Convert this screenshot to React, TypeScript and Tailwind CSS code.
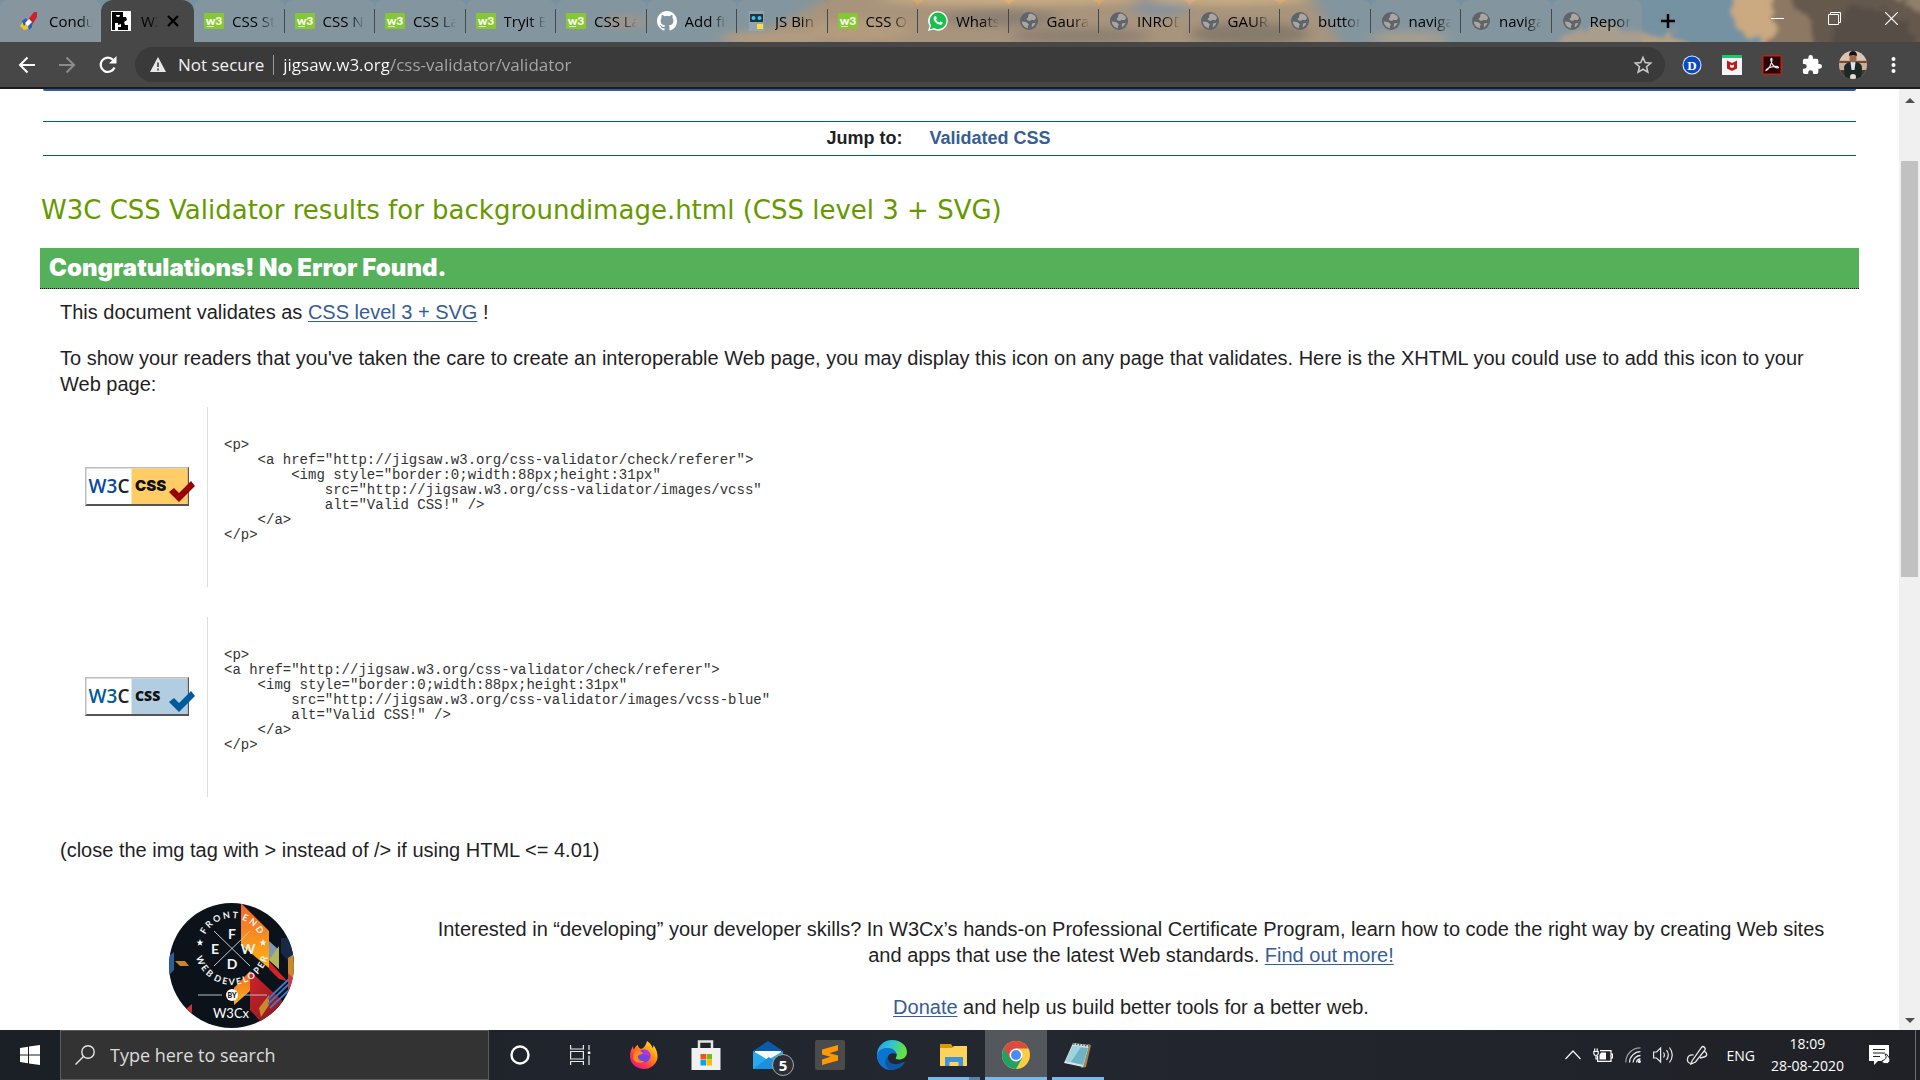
import React from "react";

type TabIcon = "w3" | "github" | "jsbin" | "whatsapp" | "globe";

const tabs: { title: string; icon: TabIcon }[] = [
  { title: "CSS Styling Lists", icon: "w3" },
  { title: "CSS Navigation", icon: "w3" },
  { title: "CSS Layout", icon: "w3" },
  { title: "Tryit Editor", icon: "w3" },
  { title: "CSS Layout", icon: "w3" },
  { title: "Add files", icon: "github" },
  { title: "JS Bin", icon: "jsbin" },
  { title: "CSS Overflow", icon: "w3" },
  { title: "WhatsApp", icon: "whatsapp" },
  { title: "Gaurav", icon: "globe" },
  { title: "INRODUCTION", icon: "globe" },
  { title: "GAURAV", icon: "globe" },
  { title: "button", icon: "globe" },
  { title: "navigation", icon: "globe" },
  { title: "navigation", icon: "globe" },
  { title: "Report", icon: "globe" },
];

const yellowCode = `<p>
    <a href="http://jigsaw.w3.org/css-validator/check/referer">
        <img style="border:0;width:88px;height:31px"
            src="http://jigsaw.w3.org/css-validator/images/vcss"
            alt="Valid CSS!" />
    </a>
</p>`;

const blueCode = `<p>
<a href="http://jigsaw.w3.org/css-validator/check/referer">
    <img style="border:0;width:88px;height:31px"
        src="http://jigsaw.w3.org/css-validator/images/vcss-blue"
        alt="Valid CSS!" />
    </a>
</p>`;

function SiteIcon({ kind }: { kind: TabIcon }) {
  if (kind === "w3")
    return (
      <svg viewBox="0 0 20 20" className="size-5 shrink-0">
        <rect y="2" width="20" height="16" rx="1" fill="#86c832" />
        <text x="10" y="13.500" textAnchor="middle" fontFamily="Lato, sans-serif" fontWeight="900" fontSize="12" fill="#fff">w3</text>
        <path d="M3 15.500h7" stroke="#d9f0b8" strokeWidth="1" />
      </svg>
    );
  if (kind === "github")
    return (
      <svg viewBox="0 0 16 16" className="size-5 shrink-0" fill="#fff">
        <path d="M8 0C3.58 0 0 3.58 0 8c0 3.54 2.29 6.53 5.47 7.59.4.07.55-.17.55-.38 0-.19-.01-.82-.01-1.49-2.01.37-2.53-.49-2.69-.94-.09-.23-.48-.94-.82-1.13-.28-.15-.68-.52-.01-.53.63-.01 1.08.58 1.23.82.72 1.21 1.87.87 2.33.66.07-.52.28-.87.51-1.07-1.78-.2-3.64-.89-3.64-3.95 0-.87.31-1.59.82-2.15-.08-.2-.36-1.02.08-2.12 0 0 .67-.21 2.2.82a7.6 7.6 0 0 1 4 0c1.53-1.04 2.2-.82 2.2-.82.44 1.100.16 1.920.08 2.120.51.56.82 1.270.82 2.150 0 3.070-1.870 3.750-3.650 3.950.29.25.54.73.54 1.480 0 1.070-.01 1.930-.01 2.200 0 .21.15.46.55.38A8 8 0 0 0 16 8c0-4.420-3.580-8-8-8z" />
      </svg>
    );
  if (kind === "jsbin")
    return (
      <svg viewBox="0 0 20 20" className="size-5 shrink-0">
        <rect x="2" y="0" width="15" height="20" fill="#93a5b1" />
        <rect x="3" y="3" width="13" height="8" fill="#24323c" />
        <circle cx="6.500" cy="7" r="2" fill="#3cc3f2" />
        <circle cx="12.500" cy="7" r="2" fill="#3cc3f2" />
        <rect x="10" y="13" width="6" height="5" fill="#f7df3e" />
      </svg>
    );
  if (kind === "whatsapp")
    return (
      <svg viewBox="0 0 20 20" className="size-5 shrink-0">
        <path d="M0 20l1.500-5A9.800 9.800 0 1 1 5.300 18.600z" fill="#fff" />
        <path d="M1.800 18.200l1.200-4A8.300 8.300 0 1 1 6 17.100z" fill="#18c04c" />
        <path d="M6.700 5.300c.6-.5 1.200-.3 1.400.2l.7 1.600c.1.500-.6 1-.8 1.300.8 1.500 1.900 2.500 3.400 3.100.4-.3.8-1.200 1.300-1l1.700.8c.6.4.1 1.600-.6 2.100-1.300.9-3.300.2-4.900-.8-1.600-1.100-2.900-2.900-3.200-4.300-.2-1.300.3-2.400 1-3z" fill="#fff" />
      </svg>
    );
  return (
    <svg viewBox="0 0 20 20" className="size-5 shrink-0">
      <circle cx="10" cy="10" r="9" fill="#5f646b" />
      <path d="M9.500 3.200l2.500-.6c2.300.6 4.200 2.200 5.100 4.400l-1.600 2.200-3.200-.5-1.200 1.300-2.200-.4-1.600-1.600 1.700-1.500zM2.800 10.500l4.200.6 3 2.100-1.200 2 .4 2C6 17 3.200 14.400 2.800 10.500zM13 12.500l3.500-.7c-.6 2-2 3.700-3.900 4.600z" fill="#a9a79f" />
    </svg>
  );
}

function Sky() {
  return (
    <svg aria-hidden="true" className="absolute inset-0 size-full" viewBox="0 0 1920 42" preserveAspectRatio="none">
      <defs>
        <filter id="soft" filterUnits="userSpaceOnUse" x="500" y="-40" width="1100" height="130"><feGaussianBlur stdDeviation="7 4" /></filter>
        <filter id="puff" filterUnits="userSpaceOnUse" x="1200" y="-40" width="760" height="130">
          <feTurbulence type="fractalNoise" baseFrequency="0.06" numOctaves="4" seed="4" result="n" />
          <feDisplacementMap in="SourceGraphic" in2="n" scale="20" xChannelSelector="R" yChannelSelector="G" />
          <feGaussianBlur stdDeviation="2" />
        </filter>
      </defs>
      <rect width="1920" height="42" fill="#7592a2" />
      <g filter="url(#soft)">
        <path d="M700 60L800 14 860-20h440l50 80z" fill="#b3906a" />
        <ellipse cx="625" cy="22" rx="22" ry="6" fill="#a7917f" />
        <ellipse cx="770" cy="38" rx="50" ry="7" fill="#c49d72" />
        <ellipse cx="860" cy="30" rx="50" ry="10" fill="#c79c6c" />
        <ellipse cx="1000" cy="18" rx="60" ry="9" fill="#85705c" />
        <ellipse cx="1080" cy="36" rx="70" ry="9" fill="#87705a" />
        <ellipse cx="1160" cy="8" rx="30" ry="9" fill="#7c8e99" />
        <ellipse cx="1250" cy="34" rx="60" ry="12" fill="#7c6650" />
        <ellipse cx="1010" cy="-1" rx="130" ry="5" fill="#f0bd78" />
        <ellipse cx="1230" cy="-1" rx="80" ry="5" fill="#f0bd78" />
        <ellipse cx="1410" cy="38" rx="40" ry="6" fill="#b7a385" />
      </g>
      <g filter="url(#puff)">
        <path d="M1545 50q22-18 42-22 16-12 32 2 22-2 32 8 12-8 26-2 18 4 34 24z" fill="#b5a086" />
        <path d="M1620 60q10-14 40-8l30 10z" fill="#7b6f62" />
        <path d="M1744 -15q-24 26-8 36-2 14 22 18l30 30h170V-15z" fill="#cba981" />
        <path d="M1775 -15q-6 22 0 34 10 12 -8 26l20 20h150V-15z" fill="#8d7863" />
        <path d="M1800 -15q-10 22 8 30 8 14 0 26l40 20h110V-15z" fill="#65594e" />
        <path d="M1840 14q30-12 50 0 20 14 24 20v26h-90z" fill="#564e47" />
        <path d="M1894 -15h60v36q-30-4-60-24z" fill="#8f7f6d" />
      </g>
    </svg>
  );
}

function TabStrip() {
  return (
    <header className="relative h-[42px] shrink-0 overflow-hidden font-['Open_Sans',sans-serif] text-[15px] text-black">
      <Sky />
      <div className="relative flex h-full">
        <div role="tablist" className="flex min-w-0 flex-1">
          <button role="tab" aria-selected="false" className="flex w-[101px] shrink-0 items-center gap-2.5 rounded-t-lg bg-[#999a99]/50 pl-[19px]">
            <svg viewBox="0 0 20 20" className="size-5 shrink-0">
              <path d="M8 10L15 1l3 0 0 5-5 8z" fill="#c9242b" />
              <path d="M1 15l5-7 4 2-1 8-4 1z" fill="#f4c430" />
              <path d="M3 10l4-3 2 3-4 5zM9 14l4-2 0 4-3 3z" fill="#1f5fc4" />
              <path d="M6 12l4-4 3 3-4 4z" fill="#fff" />
            </svg>
            <span className="w-11 overflow-hidden whitespace-nowrap mask-r-from-70%">Conduct</span>
          </button>
          <div role="tab" aria-selected="true" className="flex w-[93px] shrink-0 items-center rounded-t-xl bg-[#474747] pl-2.5">
            <svg viewBox="0 0 20 20" className="size-5 shrink-0">
              <rect width="20" height="20" fill="#fff" />
              <rect x="1" y="1" width="18" height="18" fill="#000" />
              <path d="M12 1h7v18h-2v-5h-3l-1-3 3-2-1-3h-3z" fill="#fff" />
              <path d="M5 4a2 2 0 1 0 4 0M4 12h3v2l3-1v3H7v3H4z" fill="#fff" />
            </svg>
            <span className="ml-2.5 w-[18px] overflow-hidden whitespace-nowrap mask-r-from-50%">W3C CSS</span>
            <button aria-label="Close tab" className="ml-1 p-1">
              <svg viewBox="0 0 12 12" className="size-3"><path d="M1 1l10 10M11 1L1 11" stroke="#000" strokeWidth="2.400" /></svg>
            </button>
          </div>
          {tabs.map((t, i) => (
            <button key={i} role="tab" aria-selected="false" className="relative flex min-w-0 flex-1 items-center gap-2 rounded-t-lg bg-[#999a99]/40 pl-2.5 pr-2.5 text-left">
              <SiteIcon kind={t.icon} />
              <span className="min-w-0 flex-1 overflow-hidden whitespace-nowrap mask-r-from-60%">{t.title}</span>
              {i < tabs.length - 1 && <span className="absolute right-0 top-[9px] h-6 w-px bg-[#45494b]" />}
            </button>
          ))}
        </div>
        <div className="flex w-[278px] shrink-0 items-center">
          <button aria-label="New tab" className="ml-[18px]">
            <svg viewBox="0 0 16 16" className="size-4"><path d="M8 1v14M1 8h14" stroke="#000" strokeWidth="2.500" /></svg>
          </button>
          <div className="ml-auto flex items-center gap-11 pr-[22px] pb-1.5">
            <button aria-label="Minimize"><svg viewBox="0 0 13 13" className="size-[13px]"><path d="M0 6.500h13" stroke="#fff" /></svg></button>
            <button aria-label="Restore"><svg viewBox="0 0 13 13" className="size-[13px]"><path d="M.5 2.500h10v10H.5zM2.500 2.500v-2h10v10h-2" stroke="#fff" fill="none" /></svg></button>
            <button aria-label="Close"><svg viewBox="0 0 13 13" className="size-[13px]"><path d="M0 0l13 13M13 0L0 13" stroke="#fff" strokeWidth="1.200" /></svg></button>
          </div>
        </div>
      </div>
    </header>
  );
}

function Toolbar() {
  return (
    <div className="flex h-[47px] shrink-0 items-center border-b-2 border-[#1c1c1c] bg-[#474747] font-['Open_Sans',sans-serif] text-[17px] text-[#f1f1f1]">
      <button aria-label="Back" className="ml-[18px]">
        <svg viewBox="0 0 18 18" className="size-[18px]" fill="none" stroke="#fff" strokeWidth="2"><path d="M17 9H2M9.500 1.500L2 9l7.500 7.500" /></svg>
      </button>
      <button aria-label="Forward" className="ml-[22px]">
        <svg viewBox="0 0 18 18" className="size-[18px]" fill="none" stroke="#8c8c8c" strokeWidth="2"><path d="M1 9h15M8.500 1.500L16 9l-7.500 7.500" /></svg>
      </button>
      <button aria-label="Reload" className="ml-[22px]">
        <svg viewBox="0 0 20 20" className="size-5"><path d="M16.500 12.500A7.200 7.200 0 1 1 15 4.700" fill="none" stroke="#fff" strokeWidth="2.200" /><path d="M18.500 1v7.500H11z" fill="#fff" /></svg>
      </button>
      <div className="ml-[17px] flex h-[35px] min-w-0 flex-1 items-center rounded-full bg-[#3a3a3a] pl-[15px] pr-3">
        <button className="flex items-center gap-3 whitespace-nowrap">
          <svg viewBox="0 0 16 15" className="h-[15px] w-4"><path d="M8 0l8 15H0z" fill="#e8e8e8" /><path d="M8 5.500v4.500M8 11.500v2" stroke="#3a3a3a" strokeWidth="1.600" /></svg>
          Not secure
        </button>
        <span className="mx-[9px] h-5 w-px bg-[#9a9a9a]" />
        <input
          aria-label="Address and search bar"
          defaultValue="jigsaw.w3.org/css-validator/validator"
          className="min-w-0 flex-1 bg-[linear-gradient(90deg,#ffffff_106px,#a9a9a9_106px)] bg-clip-text text-transparent outline-none"
        />
        <button aria-label="Bookmark this page">
          <svg viewBox="0 0 20 20" className="size-5"><path d="M10 2.500l2.200 5.100 5.500.5-4.200 3.600 1.300 5.400L10 14.200l-4.800 2.900 1.300-5.400L2.300 8.100l5.500-.5z" fill="none" stroke="#c9c9c9" strokeWidth="1.600" /></svg>
        </button>
      </div>
      <div className="flex w-[255px] shrink-0 items-center pl-[17px]">
        <button aria-label="Dictionary">
          <svg viewBox="0 0 20 20" className="size-5"><circle cx="10" cy="10" r="9.500" fill="#e8eefb" /><circle cx="10" cy="10" r="8.500" fill="#0b49c6" /><text x="10" y="14.500" textAnchor="middle" fontFamily="Liberation Serif" fontWeight="700" fontSize="13" fill="#fff">D</text></svg>
        </button>
        <button aria-label="WebAdvisor" className="ml-5">
          <svg viewBox="0 0 20 20" className="size-5"><rect width="20" height="20" fill="#f5f5f5" /><rect width="20" height="3" fill="#1fc86e" /><path d="M5 5.500l5 2.500 5-2.500v8L10 16l-5-2.500z" fill="#c01818" /><path d="M8 9.500l2 1 2-1v2.500l-2 1-2-1z" fill="#f5f5f5" /></svg>
        </button>
        <button aria-label="Acrobat" className="ml-5">
          <svg viewBox="0 0 20 20" className="size-5"><rect x=".75" y=".75" width="18.500" height="18.500" rx="1" fill="#26080a" stroke="#c1210f" strokeWidth="1.500" /><path d="M4 15.500c2.500-.5 6-7 6-11.500 0-1-1.500-.8-1.200 1C9.500 9 12.500 13 15.500 13c1.800-.2.8-1.800-1.500-1.600-3 .2-7 1.100-9 2.600-1 .7-1 1.500-1 1.500z" fill="none" stroke="#f3e4e4" strokeWidth="1.200" /></svg>
        </button>
        <button aria-label="Extensions" className="ml-5">
          <svg viewBox="1 1 22 22" className="size-5"><path fill="#fff" d="M20.500 11H19V7a2 2 0 0 0-2-2h-4V3.500a2.500 2.500 0 0 0-5 0V5H4a2 2 0 0 0-2 2v3.800h1.500a2.700 2.700 0 0 1 0 5.400H2V20a2 2 0 0 0 2 2h3.800v-1.500a2.700 2.700 0 0 1 5.400 0V22H17a2 2 0 0 0 2-2v-4h1.500a2.500 2.500 0 0 0 0-5z" /></svg>
        </button>
        <button aria-label="Profile" className="ml-[17px]">
          <svg viewBox="0 0 28 28" className="size-7">
            <clipPath id="face"><circle cx="14" cy="14" r="14" /></clipPath>
            <g clipPath="url(#face)">
              <rect width="28" height="28" fill="#c9b09a" />
              <rect width="28" height="9" fill="#d8c6b4" /><rect y="10" width="28" height="2" fill="#7c4a2c" />
              <rect y="19" width="28" height="9" fill="#4a3a2c" />
              <path d="M6 28L5 16q1-4 6-5l6 0q6 1 6 6l-1 11z" fill="#1c2a27" />
              <path d="M11.500 11h5l-1 8h-3z" fill="#dfe3e6" />
              <path d="M10.500 5q3.500-5 7 0v4q-3.500 5-7 0z" fill="#9a6a50" /><path d="M10 5q0-5 4-5t4 5q-4-2-8 0z" fill="#18120f" />
              <circle cx="14" cy="26" r="3" fill="#e8dccb" />
            </g>
          </svg>
        </button>
        <button aria-label="Menu" className="ml-6">
          <svg viewBox="0 0 5 18" className="h-[18px] w-[5px]" fill="#fff"><circle cx="2.500" cy="3" r="2" /><circle cx="2.500" cy="9" r="2" /><circle cx="2.500" cy="15" r="2" /></svg>
        </button>
      </div>
    </div>
  );
}

function CssBadge({ fill, blue, check, font, size }: { fill: string; blue: string; check: string; font: string; size: number }) {
  return (
    <svg role="img" aria-label="Valid CSS!" viewBox="0 0 110 39" className="h-[39px] w-[110px]">
      <rect width="104" height="39" fill="#bdbdbd" />
      <path d="M0 39l2-2h100V2l2-2v39z" fill="#555" />
      <rect x="1.500" y="1.500" width="101" height="35.500" fill="#fff" />
      <rect x="46.500" y="1.500" width="56" height="35.500" fill={fill} />
      <text x="24" y="26" textAnchor="middle" fontFamily="Open Sans" fontSize="19" fontWeight="600" fill={blue}>W3<tspan fill="#222">C</tspan></text>
      <text x="50" y="24" fontFamily={font} fontSize={size} fontWeight="900" fill="#111">CSS</text>
      <path d="M84 25l5-4 5 5L106 14l4 5-16 16z" fill={check} />
    </svg>
  );
}

function CourseLogo() {
  return (
    <svg role="img" aria-label="Front-End Web Developer by W3Cx" viewBox="0 0 125 125" className="size-[125px]">
      <defs>
        <clipPath id="disc"><circle cx="62.500" cy="62.500" r="62.500" /></clipPath>
        <linearGradient id="flame" x1="0" y1="0" x2="0" y2="1"><stop offset="0" stopColor="#f2642a" /><stop offset="1" stopColor="#fdb515" /></linearGradient>
        <linearGradient id="ember" x1="0" y1="0" x2="1" y2="1"><stop offset="0" stopColor="#d3222a" /><stop offset="1" stopColor="#7c1a1e" /></linearGradient>
        <path id="top" d="M33 45a30 30 0 0 1 60 0" />
        <path id="bottom" d="M26 45a37 37 0 0 0 74 0" />
      </defs>
      <g clipPath="url(#disc)">
        <rect width="125" height="125" fill="#0b1219" />
        <path d="M72 0l28 28v37L72 42z" fill="url(#flame)" />
        <path d="M100 38l10 9v19l-10-9z" fill="#7d98b5" /><path d="M100 57l10-14v23z" fill="#b3b65c" />
        <path d="M112 35h13v30l-13-15z" fill="#162a48" />
        <path d="M100 58l18 20-8-2-10-10z" fill="#d3222a" />
        <path d="M119 55l6-4v28l-6-8z" fill="#c98a2a" /><path d="M119 70l6 6v14l-6-3z" fill="#d8343a" />
        <path d="M81 68l38 35-27 16-11-12z" fill="url(#ember)" />
        <path d="M65 85l16-17v20L65 102z" fill="url(#flame)" />
        <path d="M90 105l10-13v10l-8 12z" fill="#c98a2a" />
        <path d="M99 96l21-20M99 101l21-20M101 105l19-18" stroke="#3f77c4" strokeWidth="1.800" />
        <path d="M0 53l5-4v18l-5 5z" fill="#2c5d9b" />
        <path d="M6 58h10l4 5h-9z" fill="#c9862c" />
        <path d="M17 106l6-5v9z" fill="#c8343b" />
        <path d="M45 28l36 35M81 28L45 63" stroke="#c4c8cc" strokeWidth="1" />
        <g fill="#f4f4f4" fontFamily="Lato, sans-serif" fontWeight="700">
          <g fontSize="9">
            <text><textPath href="#top" startOffset="50%" textAnchor="middle">F R O N T&#160; E N D</textPath></text>
            <text><textPath href="#bottom" startOffset="50%" textAnchor="middle">W E B&#160; D E V E L O P E R</textPath></text>
          </g>
          <path d="M31 36l1 2.500 2.500.2-2 1.600.7 2.500-2.200-1.400-2.200 1.400.7-2.500-2-1.600 2.500-.2zM94 36l1 2.500 2.500.2-2 1.600.7 2.500-2.200-1.400-2.200 1.400.7-2.500-2-1.600 2.500-.2z" />
          <g fontSize="14" textAnchor="middle"><text x="63" y="36">F</text><text x="46" y="51">E</text><text x="79" y="51">W</text><text x="63" y="66">D</text></g>
        </g>
        <path d="M29 92h24M73 92h25" stroke="#b9bcbf" strokeWidth="1.200" />
        <circle cx="63" cy="92" r="6" fill="#fff" />
        <text x="63" y="95" textAnchor="middle" fontFamily="Lato" fontWeight="900" fontSize="7" fill="#111">BY</text>
        <text x="62" y="115" textAnchor="middle" fontFamily="Lato" fontSize="13" fill="#fff">W3Cx</text>
      </g>
    </svg>
  );
}

function CodeRow({ badge, code }: { badge: React.ReactNode; code: string }) {
  return (
    <div className="flex h-[180px] pl-[85px]">
      <div className="mr-3 flex items-center pb-[21px]">{badge}</div>
      <pre className="border-l border-[#dddddd] pl-4 pt-[31px] font-['Liberation_Mono',monospace] text-[14px] leading-[15px] text-[#333333]">{code}</pre>
    </div>
  );
}

const link = "text-[#365d95] underline decoration-1 underline-offset-2";

function ValidatorPage() {
  return (
    <main className="min-w-0 flex-1 overflow-hidden bg-white font-['Liberation_Sans',sans-serif] text-[20px] leading-[26px] text-[#1f1f26]">
      <div className="mx-[43px] h-0.5 rounded-b bg-[#365d95]" />
      <nav className="mx-[43px] mt-[30px] flex h-[35px] items-center justify-center gap-[27px] border-y border-[#005a9c] pr-[22px] pb-0.5 text-[18px] font-bold">
        <span>Jump to:</span>
        <a href="#css" className="text-[#365d95]">Validated CSS</a>
      </nav>
      <h2 className="mt-9 px-[41px] font-['DejaVu_Sans',sans-serif] text-[26px] leading-[36px] text-[#669900]">
        W3C CSS Validator results for backgroundimage.html (CSS level 3 + SVG)
      </h2>
      <h3 className="mx-10 mt-5 flex h-[41px] items-center border-b border-dotted border-black bg-[#55b05a] px-[9px] font-['Inter',sans-serif] text-[24px] font-black text-white">
        Congratulations! No Error Found.
      </h3>
      <p className="mx-[60px] mt-2.5">
        This document validates as <a href="#level3" className={link}>CSS level 3 + SVG</a> !
      </p>
      <p className="mx-[60px] mt-5">
        To show your readers that you've taken the care to create an interoperable Web page, you may display this icon on any page that validates. Here is the XHTML you could use to add this icon to your Web page:
      </p>
      <div className="mt-2.5 flex flex-col gap-[30px]">
        <CodeRow code={yellowCode} badge={<CssBadge fill="#ffcc66" blue="#0b49a0" check="#990000" font="Inter" size={15} />} />
        <CodeRow code={blueCode} badge={<CssBadge fill="#b3cde0" blue="#005a9c" check="#005a9c" font="Open Sans" size={14} />} />
      </div>
      <p className="mx-[60px] mt-10">(close the img tag with &gt; instead of /&gt; if using HTML &lt;= 4.01)</p>
      <div className="mx-[60px] mt-10 flex">
        <div className="flex w-[363px] shrink-0 pl-[109px]"><CourseLogo /></div>
        <div className="min-w-0 flex-1 pt-[13px] text-center">
          <p>
            Interested in “developing” your developer skills? In W3Cx’s hands-on Professional Certificate Program, learn how to code the right way by creating Web sites and apps that use the latest Web standards. <a href="#more" className={link}>Find out more!</a>
          </p>
          <p className="mt-[26px]"><a href="#donate" className={link}>Donate</a> and help us build better tools for a better web.</p>
        </div>
      </div>
    </main>
  );
}

function Scrollbar() {
  return (
    <div aria-hidden="true" className="flex w-[21px] shrink-0 flex-col items-center bg-[#f0f0f0]">
      <svg viewBox="0 0 10 5" className="mt-[9px] h-[5px] w-2.5"><path d="M5 0l5 5H0z" fill="#505050" /></svg>
      <div className="mt-[58px] h-[416px] w-[17px] bg-[#c1c1c1]" />
      <svg viewBox="0 0 10 5" className="mb-[7px] mt-auto h-[5px] w-2.5"><path d="M0 0h10L5 5z" fill="#505050" /></svg>
    </div>
  );
}

function AppButton({ label, children, state }: { label: string; children: React.ReactNode; state?: "open" | "active" | "group" }) {
  return (
    <button aria-label={label} className={state === "active" ? "relative flex h-full w-[62px] items-center justify-center bg-[#54575c]" : "relative flex h-full w-[62px] items-center justify-center"}>
      {children}
      {state === "active" && <span className="absolute inset-x-0 bottom-0 h-[3px] bg-[#76b9ed]" />}
      {state === "open" && <span className="absolute inset-x-[5px] bottom-0 h-[3px] bg-[#76b9ed]" />}
      {state === "group" && <span className="absolute inset-x-[5px] bottom-0 h-[3px] border-r-[11px] border-[#5585ad] bg-[#76b9ed]" />}
    </button>
  );
}

function Taskbar() {
  return (
    <footer className="flex h-[50px] shrink-0 items-center bg-linear-to-r from-[#1b2026] via-[#232730] to-[#1f2126] font-['Open_Sans',sans-serif] text-white">
      <button aria-label="Start" className="flex h-full w-[60px] items-center justify-center">
        <svg viewBox="0 0 20 20" className="size-5" fill="#fff"><path d="M0 3l8-1.200v7.700H0zM9 1.600L20 0v9.500H9zM0 10.500h8v7.700L0 17zM9 10.500h11V20L9 18.400z" /></svg>
      </button>
      <label className="flex h-full w-[429px] items-center gap-[15px] border border-[#5c5c5c] bg-[#333333] pl-3.5">
        <svg viewBox="0 0 20 20" className="size-5 shrink-0" fill="none" stroke="#e6e6e6" strokeWidth="1.400"><circle cx="13" cy="7" r="6.200" /><path d="M8.500 11.500L.5 19.500" /></svg>
        <input type="search" aria-label="Search" placeholder="Type here to search" className="min-w-0 flex-1 bg-transparent text-[18px] placeholder-[#dcdcdc] outline-none" />
      </label>
      <AppButton label="Cortana"><svg viewBox="0 0 20 20" className="size-5"><circle cx="10" cy="10" r="8.500" fill="none" stroke="#fff" strokeWidth="2.400" /></svg></AppButton>
      <AppButton label="Task View">
        <svg viewBox="0 0 21 20" className="mr-1 h-5 w-[21px]" fill="none" stroke="#e8e8e8" strokeWidth="1.200"><path d="M.6 0v4h12.800V0M.6 6.500h12.800v7.500H.6zM.6 20v-3.500h12.800V20M19 0v5M19 10.500V20" /><rect x="17.800" y="6.500" width="2.500" height="2.500" fill="#fff" stroke="none" /></svg>
      </AppButton>
      <AppButton label="Firefox">
        <svg viewBox="0 0 30 30" className="size-[30px]">
          <defs><linearGradient id="ff" x1="1" y1="0" x2="0.200" y2="1"><stop offset="0" stopColor="#fff44f" /><stop offset=".4" stopColor="#ff980e" /><stop offset=".75" stopColor="#ff3750" /><stop offset="1" stopColor="#e31587" /></linearGradient></defs>
          <path d="M18 1c4 3 5 5 5.500 7 1-1 1-2 1-3 3 4 4.500 9 4 13-1 6-6.500 11-13.500 11S1 24 1 16c0-5 2-8 3-10 0 2 .5 3 1 3.500C6 7 8 5 9 5c0 2 1 3 3 4 3-1 5-4 6-8z" fill="url(#ff)" />
          <circle cx="15" cy="16" r="6.500" fill="#7542e5" /><path d="M15 9.500a6.500 6.500 0 0 1 6 9c-1-3-3-4-6-4l-3-1 3-1z" fill="#b833e1" />
          <path d="M6 11c3-2 6 0 8 2-1 2-4 1-5 3-1 3 3 6 7 5-5 4-12 1-12-4z" fill="#ff8a16" />
        </svg>
      </AppButton>
      <AppButton label="Microsoft Store">
        <svg viewBox="0 0 30 30" className="size-[30px]"><path d="M8 9V1.500h13V9" fill="none" stroke="#e5e5e5" strokeWidth="2.500" /><path d="M.5 8h29v22H.5z" fill="#f1f1f1" /><path d="M9.500 14H15v5.500H9.500z" fill="#f25022" /><path d="M15.500 14H21v5.500h-5.500z" fill="#7fba00" /><path d="M9.500 20H15v5.500H9.500z" fill="#00a4ef" /><path d="M15.500 20H21v5.500h-5.500z" fill="#ffb900" /></svg>
      </AppButton>
      <AppButton label="Mail, 5 new">
        <svg viewBox="0 0 30 30" className="size-[30px]"><path d="M0 11L15 1l15 10v4H0z" fill="#0a5ca8" /><path d="M2 11h26v10H2z" fill="#f7f7f7" /><path d="M0 11l15 9 15-9v18H0z" fill="#29a9ea" /><path d="M0 29l16-12 14 12z" fill="#1b8fe0" /></svg>
        <span className="absolute bottom-1 right-[5px] flex size-[22px] items-center justify-center rounded-full border border-[#a8a8a8] bg-[#2c3035] text-[15px] font-bold leading-none">5</span>
      </AppButton>
      <AppButton label="Sublime Text">
        <svg viewBox="0 0 30 30" className="size-[30px]"><rect width="30" height="30" rx="2" fill="#4b4b4b" /><path d="M7 9.500L23 5v5.500l-8.500 2.700L23 15.500v5L7 25v-5.500l8.500-2.700L7 14.500z" fill="#ff9800" /></svg>
      </AppButton>
      <AppButton label="Edge">
        <svg viewBox="0 0 30 30" className="size-[30px]">
          <defs><linearGradient id="eg" x1="0" y1="0" x2="1" y2=".3"><stop offset="0" stopColor="#1c9de0" /><stop offset=".5" stopColor="#30c3d5" /><stop offset="1" stopColor="#66e33d" /></linearGradient></defs>
          <path d="M0 15C0 6 7 0 15 0c9 0 15 6 15 12 0 5-4 7.500-8 7.500-3 0-4-1-3-2 2-3 0-7-5-7-7 0-11 4-14 9z" fill="url(#eg)" />
          <path d="M0 16C1 9 7 7.500 11 8c5 0 8 3 8 6-5-2-9 1-8 6 1 5 6 8 10 7-2 2-5 3-8 3-8-1-13-7-13-14z" fill="#0c74cf" />
          <path d="M11 16c-1 6 4 9 10 8 3-.5 6-2.500 7-2-2 5-8 8-14 8-6-2-8-9-3-14z" fill="#0f56a3" />
        </svg>
      </AppButton>
      <AppButton label="File Explorer" state="group">
        <svg viewBox="0 0 30 30" className="size-[30px]"><path d="M1 4h11l2 3h14v19H1z" fill="#d99a00" /><path d="M1 8h12l2-2h13v20H1z" fill="#ffd35b" /><path d="M6 26V17h18v9h-4.500v-4h-9v4z" fill="#3f93d8" /></svg>
      </AppButton>
      <AppButton label="Chrome" state="active">
        <svg viewBox="0 0 28 28" className="size-7">
          <circle cx="14" cy="14" r="14" fill="#ffcd42" />
          <path d="M14 14L1.900 7A14 14 0 0 0 14 28l6-10.500z" fill="#1da362" />
          <path d="M14 14V7.500h12.400A14 14 0 0 0 1.900 7l6 10.500z" fill="#dd4b3e" />
          <circle cx="14" cy="14" r="6.500" fill="#fff" /><circle cx="14" cy="14" r="5" fill="#4c8bf5" />
        </svg>
      </AppButton>
      <AppButton label="Notepad" state="open">
        <svg viewBox="0 0 30 30" className="size-[30px]"><path d="M25 4l3 1-5 22-5 1z" fill="#a5814f" /><path d="M10 3l16 2-6 22-19-4z" fill="#d7e5e9" /><path d="M10 6l15 2-5 17-17-4z" fill="#6fb3c4" /><path d="M10 6l8 1-10 15-5-1z" fill="#9fd3de" /><path d="M10 4l16 2" stroke="#555" strokeWidth="1.500" strokeDasharray="1.500 1.500" /></svg>
      </AppButton>
      <div className="ml-auto flex h-full items-center pr-1">
        <button aria-label="Show hidden icons"><svg viewBox="0 0 16 10" className="h-2.5 w-4" fill="none" stroke="#eee" strokeWidth="1.300"><path d="M.5 9L8 1l7.500 8" /></svg></button>
        <button aria-label="Battery" className="ml-3">
          <svg viewBox="0 0 20 14" className="h-3.5 w-5" fill="none" stroke="#fff" strokeWidth="1.200"><path d="M7 2.600h11v10.800H4.600V8M18.500 6h1v4h-1" /><path d="M8 4.500h5v7H6.500V7z" fill="#fff" stroke="none" /><path d="M.8 3.500h4.400v2Q5 7.500 3 7.500T.8 5.500zM1.700 3.500V.5M4.200 3.500V.5M3 7.500V11h1.500" /></svg>
        </button>
        <button aria-label="Network" className="ml-3">
          <svg viewBox="0 0 16 16" className="size-4" fill="none" strokeWidth="1.300"><path d="M.8 15.500A14.500 14.500 0 0 1 15.500.8" stroke="#9b9b9b" /><path d="M4.500 15.500A11 11 0 0 1 15.500 4.700M8 15.500A7.500 7.500 0 0 1 15.500 8.500M11.500 15.500a4 4 0 0 1 4-3.500" stroke="#e8e8e8" /><circle cx="14.300" cy="14.500" r="1.500" fill="#fff" /></svg>
        </button>
        <button aria-label="Volume" className="ml-3">
          <svg viewBox="0 0 21 18" className="h-[18px] w-[21px]" fill="none" stroke="#e8e8e8" strokeWidth="1.200"><path d="M.6 6h3l4-4v14l-4-4h-3z" /><path d="M10.500 6.500q1.800 2.500 0 5M13.500 4q3.600 5 0 10M16.500 1.500q5.500 7.500 0 15" /></svg>
        </button>
        <button aria-label="Windows Ink" className="ml-3">
          <svg viewBox="0 0 22 20" className="h-5 w-[22px]" fill="none" stroke="#e8e8e8" strokeWidth="1.300"><path d="M6 16L15.500 2.500q1.500-2 3 0t0 3L9.500 17l-4.500 2zM7.500 10Q2 9.500 1.500 14T6 18.500M14 13l4-1q4-1 2-4.500L17.500 6" /></svg>
        </button>
        <button aria-label="Input language" className="ml-[18px] text-[14px]">ENG</button>
        <button aria-label="Clock" className="ml-4 text-center text-[14px] leading-[22px]"><time className="block">18:09</time><time className="block">28-08-2020</time></button>
        <button aria-label="Notifications" className="ml-[25px]">
          <svg viewBox="0 0 21 20" className="h-5 w-[21px]"><path d="M0 0h20v16H9l-4 4v-4H0z" fill="#fff" /><path d="M4 4.500h12M4 8h12M4 11.500h7" stroke="#1f2126" strokeWidth="1.200" /><path d="M16 9q3.500 5-3.500 7 2 4 6 2.500T20 12.500 16 9z" fill="#fff" stroke="#1f2126" /></svg>
        </button>
        <span className="ml-[25px] h-full w-px bg-[#6a6c70]" />
      </div>
    </footer>
  );
}

export default function App() {
  return (
    <div className="flex h-screen flex-col overflow-hidden">
      <TabStrip />
      <Toolbar />
      <div className="flex min-h-0 flex-1">
        <ValidatorPage />
        <Scrollbar />
      </div>
      <Taskbar />
    </div>
  );
}
